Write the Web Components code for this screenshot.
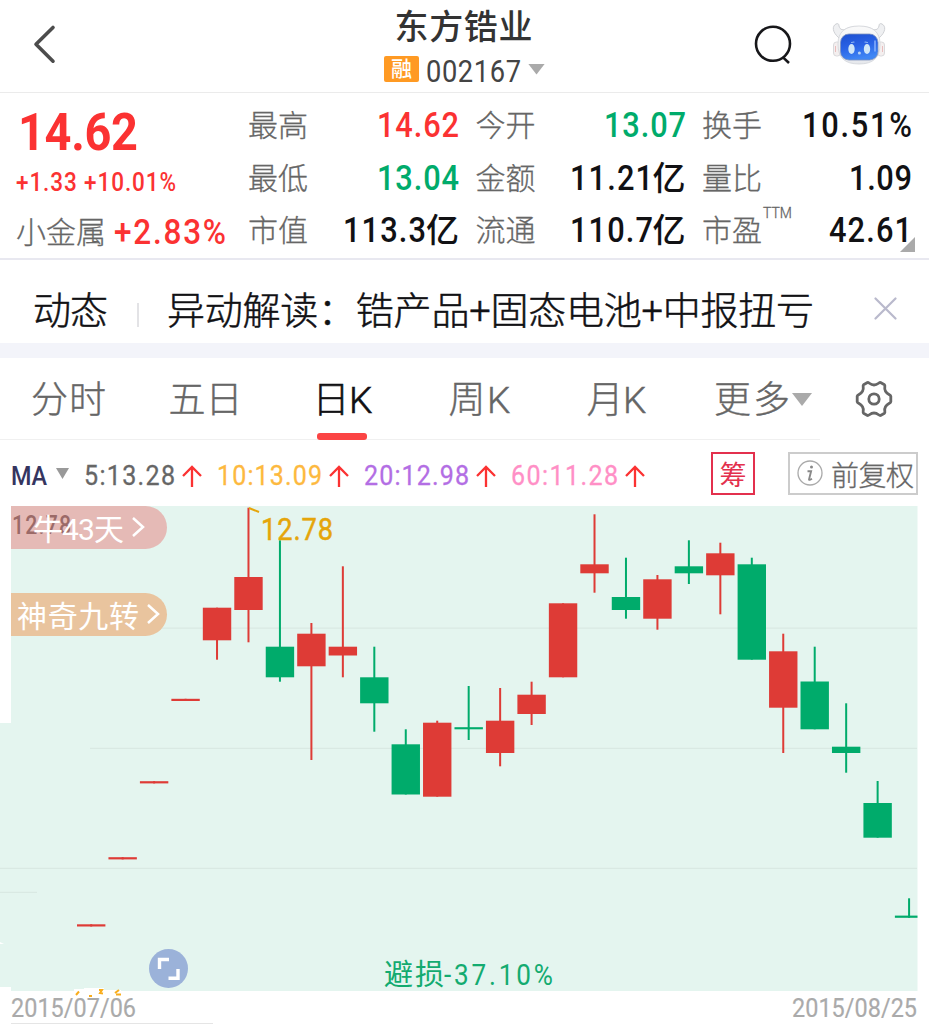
<!DOCTYPE html>
<html lang="zh-CN">
<head>
<meta charset="utf-8">
<title>东方锆业 002167</title>
<style>
  html, body {
    margin: 0;
    padding: 0;
    background: #fff;
  }

  body {
    width: 929px;
    height: 1024px;
    overflow: hidden;
    font-family: Roboto, "Noto Sans CJK SC", sans-serif;
    --up: #fb3232;
    --down: #00ab6b;
    --ink: #111114;
    --muted: #666;
  }
</style>
</head>
<body>
<stock-page></stock-page>

<script>
/* Text set to a given width with letter-spacing; "k" condenses the glyphs themselves. */
class FitText extends HTMLElement {
  constructor() {
    super();
    this.shadow = this.attachShadow({ mode: 'open' });
    this.shadow.innerHTML = `<style>
      :host { display: inline-block; white-space: nowrap; }
      span { display: inline-block; transform-origin: 0 50%; }
    </style><span><slot></slot></span>`;
    this.inner = this.shadow.querySelector('span');
  }

  connectedCallback() {
    const target = Number(this.getAttribute('w'));
    const scale = Number(this.getAttribute('k')) || 1;
    const count = [...this.textContent].length;
    const natural = this.inner.getBoundingClientRect().width;
    if (!target || count < 2) return;
    this.inner.style.letterSpacing = `${(target / scale - natural) / (count - 1)}px`;
    this.inner.style.transform = `scaleX(${scale})`;
    this.style.width = `${target}px`;
  }
}

class DownMark extends HTMLElement {
  constructor() {
    super();
    this.shadow = this.attachShadow({ mode: 'open' });
    this.shadow.innerHTML = `<style>
      :host { display: block; width: var(--w, 17px); height: var(--h, 11px); flex: none; }
      div { width: 100%; height: 100%; background: var(--mark, #aaa); clip-path: polygon(0 0, 100% 0, 50% 100%); }
    </style><div></div>`;
  }
}

class StockHeader extends HTMLElement {
  constructor() {
    super();
    this.shadow = this.attachShadow({ mode: 'open' });
    this.shadow.innerHTML = `${this.templateCSS()} ${this.templateHTML()}`;
  }

  templateCSS() {
    return `<style>
    :host {
      display: grid;
      grid-template-columns: 300px 329px 300px;
      box-sizing: border-box;
      height: 93px;
      border-bottom: 1px solid #ebebeb;
      color: #333;
    }
    svg { display: block; }
    .back { padding: 24px 0 0 32px; }
    .middle { display: flex; flex-direction: column; align-items: center; }
    .name { font-size: 34px; font-weight: 500; line-height: 40px; margin: 7px 2px 0 0; }
    .code { display: flex; align-items: center; height: 30px; margin-top: 9px; font-size: 31px; line-height: 30px; color: #444; }
    .code fit-text { padding-top: 1px; }
    .badge { width: 35px; height: 26px; line-height: 26px; margin: -4px 7px 0 0; border-radius: 2px; background: #ff9a23; color: #fff; font-size: 21px; font-weight: 500; text-align: center; }
    down-mark { margin: -4px 0 0 7px; }
    .tools { display: flex; justify-content: flex-end; padding: 22px 43px 0 0; gap: 38px; }
    </style>`;
  }

  templateHTML() {
    return `
      <div class="back">
        <svg width="26" height="42" viewBox="0 0 26 42" fill="none" stroke="#4c4c4c" stroke-width="3.6" stroke-linecap="round" stroke-linejoin="round">
          <path d="M21 3.500 4 20.300 21 37.200"/>
        </svg>
      </div>
      <div class="middle">
        <div class="name"><fit-text w="138">东方锆业</fit-text></div>
        <div class="code">
          <span class="badge">融</span>
          <fit-text w="95" k=".88">002167</fit-text>
          <down-mark></down-mark>
        </div>
      </div>
      <div class="tools">
        <svg width="42" height="44" viewBox="0 0 42 44" fill="none" stroke="#17171a" stroke-width="2.600">
          <circle cx="21" cy="21.800" r="17"/>
          <path d="M31 35.400 37 41"/>
        </svg>
        <svg width="54" height="44" viewBox="0 0 54 44">
          <defs>
            <linearGradient id="face" x1="0" y1="0" x2="0.300" y2="1">
              <stop offset="0" stop-color="#1c4fd0"/>
              <stop offset=".55" stop-color="#2a63e6"/>
              <stop offset="1" stop-color="#3f86f4"/>
            </linearGradient>
            <linearGradient id="shell" x1="0" y1="0" x2="0" y2="1">
              <stop offset="0" stop-color="#fafafa"/>
              <stop offset="1" stop-color="#e6e8ec"/>
            </linearGradient>
          </defs>
          <path d="M7 16C0 10 0 4 4 2c2-1 3 0 3 2 1 4 4 5 9 2 7-2 15-2 22 0 5 3 8 2 9-2 0-2 1-3 3-2 4 2 4 8-3 14z" fill="#eff0f2" stroke="#cfd1d5" stroke-width="1"/>
          <rect x="1.500" y="20" width="7" height="14" rx="3" fill="#f4efef" stroke="#d9d9dc"/>
          <rect x="45.500" y="20" width="7" height="14" rx="3" fill="#f4efef" stroke="#d9d9dc"/>
          <path d="M3.500 24v6M50.500 24v6" stroke="#e9bdbd" stroke-width="1"/>
          <path d="M27 4c14 0 21 6 21 18 0 14-7 20-21 20S6 36 6 22C6 10 13 4 27 4z" fill="url(#shell)" stroke="#d0d3d8" stroke-width=".8"/>
          <rect x="8.500" y="12" width="37.500" height="26" rx="8.500" fill="url(#face)" stroke="#7f93bd" stroke-width=".8"/>
          <path d="M43 19v10" stroke="#8fb6ff" stroke-width="1.400" stroke-linecap="round"/>
          <ellipse cx="19.500" cy="27" rx="3.200" ry="5" fill="#cfe6f8"/>
          <ellipse cx="35" cy="27" rx="3.200" ry="5" fill="#cfe6f8"/>
          <path d="M19.500 20.500l2.500-.5M33 20l2.500.5" stroke="#8fb8f5" stroke-width="1.200" stroke-linecap="round"/>
          <circle cx="27.400" cy="31" r="1.500" fill="#b5d3f7"/>
        </svg>
      </div>`;
  }
}

/* One label with its value: the label goes in the "label" slot. */
class StatItem extends HTMLElement {
  constructor() {
    super();
    this.shadow = this.attachShadow({ mode: 'open' });
    this.shadow.innerHTML = `<style>
      :host { display: flex; justify-content: space-between; align-items: center; color: var(--ink); }
      :host([tone="up"]) { color: var(--up); }
      :host([tone="down"]) { color: var(--down); }
      .label { font-size: 30px; font-weight: 300; line-height: 40px; color: var(--muted); display: flex; -webkit-text-stroke: .3px; }
      .value { font-size: 35px; font-weight: 500; line-height: 40px; }
      sup { font-size: 14px; line-height: 14px; margin: -5px 0 0 1px; }
    </style>
    <span class="label"><slot name="label"></slot><sup><slot name="mark"></slot></sup></span>
    <span class="value"><slot></slot></span>`;
  }
}

class QuotePanel extends HTMLElement {
  constructor() {
    super();
    this.shadow = this.attachShadow({ mode: 'open' });
    this.stats = [
      ['最高', '14.62', 82, 'up'], ['今开', '13.07', 82, 'down'], ['换手', '10.51%', 110],
      ['最低', '13.04', 82, 'down'], ['金额', '11.21亿', 116], ['量比', '1.09', 63],
      ['市值', '113.3亿', 116], ['流通', '110.7亿', 116], ['市盈', '42.61', 83, '', 'TTM']
    ];
    this.render();
  }

  render() {
    this.shadow.innerHTML = `${this.templateCSS()} ${this.templateHTML()}`;
  }

  /* The unit 亿 is wider than the digits, so it keeps its own shape. */
  templateValue(value, width) {
    if (!value.endsWith('亿')) return `<fit-text w="${width}" k=".88">${value}</fit-text>`;
    return `<fit-text w="${width - 33}" k=".88">${value.slice(0, -1)}</fit-text><span style="display:inline-block;width:33px;font-size:33px">亿</span>`;
  }

  templateStat([label, value, width, tone = '', mark = '']) {
    return `<stat-item tone="${tone}"><span slot="label">${label}</span><span slot="mark">${mark}</span>${this.templateValue(value, width)}</stat-item>`;
  }

  templateCSS() {
    return `<style>
    :host {
      display: flex;
      box-sizing: border-box;
      height: 167px;
      padding: 7px 0 0 16px;
      border-bottom: 2px solid #e8e8f0;
      position: relative;
    }
    .main { width: 232px; color: var(--up); font-weight: 500; white-space: nowrap; }
    .price { height: 58px; line-height: 58px; margin-top: 4px; padding-left: 2px; font-size: 51px; font-weight: 700; }
    .change { height: 34px; line-height: 34px; margin-top: 4px; font-size: 25px; }
    .sector { display: flex; align-items: center; height: 44px; margin-top: 11px; font-size: 35px; line-height: 44px; }
    .sector span { font-size: 30px; font-weight: 300; color: var(--muted); margin-right: 8px; -webkit-text-stroke: .3px; }
    .stats { display: grid; grid-template-columns: 211px 210px 210px; grid-auto-rows: 52.5px; column-gap: 16.5px; }
    .corner { position: absolute; right: 14px; bottom: 6px; width: 15px; height: 15px; background: #aaa; clip-path: polygon(100% 0, 100% 100%, 0 100%); }
    </style>`;
  }

  templateHTML() {
    return `
      <div class="main">
        <div class="price"><fit-text w="120" k=".92">14.62</fit-text></div>
        <div class="change"><fit-text w="160" k=".9">+1.33 +10.01%</fit-text></div>
        <div class="sector"><span>小金属</span><fit-text w="112" k=".9">+2.83%</fit-text></div>
      </div>
      <div class="stats">${this.stats.map(s => this.templateStat(s)).join('')}</div>
      <div class="corner"></div>`;
  }
}

class NewsBar extends HTMLElement {
  constructor() {
    super();
    this.shadow = this.attachShadow({ mode: 'open' });
    this.shadow.innerHTML = `<style>
      :host { display: flex; align-items: center; box-sizing: border-box; height: 98px; padding: 19px 32px 0 33px; border-bottom: 15px solid #f3f4fa; font-size: 38px; font-weight: 300; line-height: 50px; color: var(--ink); -webkit-text-stroke: .5px; }
      i { width: 2px; height: 24px; margin: 7px 28px 0 29px; background: #e3e3e6; }
      svg { margin: -5px 0 0 auto; }
    </style>
    <fit-text w="75">动态</fit-text>
    <i></i>
    <fit-text w="647">异动解读：锆产品+固态电池+中报扭亏</fit-text>
    <svg width="23" height="23" viewBox="0 0 23 23" stroke="#b9b9cc" stroke-width="2.200" stroke-linecap="round">
      <path d="M1.500 1.500 21.500 21.500M21.500 1.500 1.500 21.500"/>
    </svg>`;
  }
}

class PeriodTabs extends HTMLElement {
  constructor() {
    super();
    this.shadow = this.attachShadow({ mode: 'open' });
    this.shadow.innerHTML = `${this.templateCSS()} ${this.templateHTML()}`;
  }

  templateCSS() {
    return `<style>
    :host {
      display: grid;
      grid-template-columns: repeat(5, 137px) 135px 1fr;
      height: 82px;
      font-size: 37px;
      font-weight: 300;
      color: var(--muted);
      -webkit-text-stroke: .4px;
    }
    div { box-sizing: border-box; height: 82px; border-bottom: 1px solid #f0f0f0; display: flex; justify-content: center; line-height: 85px; position: relative; }
    .active { color: var(--ink); -webkit-text-stroke: .6px; }
    .active::after { content: ''; position: absolute; left: 43px; bottom: -1px; width: 50px; height: 7px; border-radius: 3px; background: #fb4444; }
    .more { justify-content: flex-start; padding-left: 29px; }
    .more down-mark { --w: 20px; --h: 13px; margin: 35px 0 0 2px; }
    .gear { border: 0; justify-content: flex-start; align-items: center; padding-left: 34px; }
    </style>`;
  }

  templateHTML() {
    return `
      <div><fit-text w="75">分时</fit-text></div>
      <div><fit-text w="74">五日</fit-text></div>
      <div class="active"><fit-text w="60">日K</fit-text></div>
      <div><fit-text w="62">周K</fit-text></div>
      <div><fit-text w="60">月K</fit-text></div>
      <div class="more"><fit-text w="76">更多</fit-text><down-mark></down-mark></div>
      <div class="gear">
        <svg width="40" height="40" viewBox="0 0 40 40" fill="none" stroke="#666" stroke-width="2.800" stroke-linejoin="round">
          <path d="M13.500 3.500C15 3 16 6 20 6s5-3 6.500-2.500l4 2.300c1.300 1-1 3 1 6.500s5 3 5.300 5v5.400c-.3 2-3.300 1.500-5.300 5s.3 5.500-1 6.500l-4 2.300C25 37 24 34 20 34s-5 3-6.500 2.500l-4-2.300c-1.300-1 1-3-1-6.500s-5-3-5.300-5v-5.400c.3-2 3.300-1.500 5.300-5s-.3-5.500 1-6.500z"/>
          <circle cx="20" cy="20" r="5.200"/>
        </svg>
      </div>`;
  }
}

class MaLegend extends HTMLElement {
  constructor() {
    super();
    this.shadow = this.attachShadow({ mode: 'open' });
    this.lines = [
      ['5:13.28', 91, '#666'],
      ['10:13.09', 105, '#fdb93f'],
      ['20:12.98', 105, '#b36ee4'],
      ['60:11.28', 107, '#ff8fc6']
    ];
    this.shadow.innerHTML = `${this.templateCSS()} ${this.templateHTML()}`;
  }

  templateCSS() {
    return `<style>
    :host { display: flex; align-items: center; box-sizing: border-box; height: 66px; padding: 5px 11px 0 11px; font-size: 28.5px; }
    .ma { font-size: 26px; font-weight: 500; color: #35355f; }
    down-mark { --w: 13px; --h: 11px; --mark: #999; margin: -4px 15px 0 9px; }
    .line { display: flex; align-items: center; margin-right: 15.5px; -webkit-text-stroke: .3px; }
    .arrow { margin: 0 0 0 6.5px; }
    .chips, .adjust { box-sizing: border-box; height: 43px; line-height: 47px; margin-top: -5px; }
    .chips { width: 44px; margin-left: auto; border: 2px solid #e3304d; color: #e3304d; font-size: 27px; line-height: 45px; text-align: center; }
    .adjust { display: flex; align-items: center; width: 130px; margin-left: 33px; padding-left: 7px; border: 2px solid #ccc; color: #666; font-size: 28px; font-weight: 300; white-space: nowrap; -webkit-text-stroke: .3px; }
    .adjust svg { margin: -1px 8px 0 0; flex: none; }
    .adjust fit-text { margin-top: 6px; }
    </style>`;
  }

  templateHTML() {
    const lines = this.lines.map(([text, width, color]) => `
      <span class="line">
        <fit-text w="${width}" k=".88" style="color:${color}">${text}</fit-text>
        <svg class="arrow" width="20" height="22" viewBox="0 0 20 22" fill="none" stroke="#fb3232" stroke-width="2.300">
          <path d="M10 22V2M1 11 10 2 19 11"/>
        </svg>
      </span>`).join('');
    return `
      <fit-text class="ma" w="36" k=".9">MA</fit-text>
      <down-mark></down-mark>
      ${lines}
      <span class="chips">筹</span>
      <span class="adjust">
        <svg width="26" height="26" viewBox="0 0 26 26" fill="none" stroke="#aaa" stroke-width="1.300">
          <circle cx="13" cy="13" r="12"/>
          <path d="M10.500 11.200h3.600L12 19.500q0 1 3-.8" stroke="#888" stroke-width="1.900"/>
          <circle cx="14.500" cy="7" r="1.500" fill="#888" stroke="none"/>
        </svg>
        <fit-text w="83">前复权</fit-text>
      </span>`;
  }
}

/* Rounded label stuck to the left side of the chart. */
class SideTag extends HTMLElement {
  constructor() {
    super();
    this.shadow = this.attachShadow({ mode: 'open' });
    this.shadow.innerHTML = `<style>
      :host { display: flex; align-items: center; box-sizing: border-box; width: 156px; height: 43px; border-radius: 0 22px 22px 0; font-size: 30px; line-height: 43px; color: #fff; }
      slot { display: block; padding-top: 4px; }
      svg { margin-left: 7px; margin-top: -1px; }
    </style>
    <slot></slot>
    <svg width="14" height="22" viewBox="0 0 14 22" fill="none" stroke="#fff" stroke-width="2.500"><path d="M2 2 12 11 2 20"/></svg>`;
  }
}

class CandleChart extends HTMLElement {
  constructor() {
    super();
    this.shadow = this.attachShadow({ mode: 'open' });
    // direction, high, body top, body bottom, low
    this.candles = [
      ['u', 418.3, 418.3, 420.5, 420.5],
      ['u', 351.2, 351.2, 353.4, 353.4],
      ['u', 275.2, 275.2, 277.4, 277.4],
      ['u', 192.8, 192.8, 195, 195],
      ['u', 101.7, 101.7, 134.3, 153.7],
      ['u', 1.7, 71, 104, 136.3],
      ['d', 34.3, 140.7, 171.3, 175.7],
      ['u', 117, 127.7, 160.3, 254],
      ['u', 60.3, 140.7, 149.5, 171.3],
      ['d', 140.7, 171.3, 197.3, 225.7],
      ['d', 223.3, 238.3, 288.5, 288.5],
      ['u', 214.7, 216.7, 290.7, 290.7],
      ['d', 180, 221.2, 223.3, 234],
      ['u', 182, 214.7, 247, 260.3],
      ['u', 175.7, 188.7, 208, 219],
      ['u', 97.3, 97.3, 171.3, 171.3],
      ['u', 8.3, 58.3, 67.3, 86.7],
      ['d', 51.7, 91, 104, 112.7],
      ['u', 69, 73.3, 112.7, 123.7],
      ['d', 34.3, 60.3, 67.3, 78],
      ['u', 36.7, 47.3, 69.3, 108.3],
      ['d', 51.7, 58.3, 153.7, 153.7],
      ['u', 127.7, 145.3, 201.7, 247],
      ['d', 140.7, 175.5, 223.3, 223.3],
      ['d', 197.3, 240.7, 247, 266.7],
      ['d', 275, 297, 331.7, 331.7],
      ['d', 392.3, 409.6, 411.8, 411.8]
    ];
    this.shadow.innerHTML = `${this.templateCSS()} ${this.templateHTML()}`;
  }

  templateCandle([direction, high, top, bottom, low], index) {
    const x = 91.2 + index * 31.457;
    return `<g class="${direction}">
      <rect x="${x - 1}" y="${high}" width="2" height="${low - high}"/>
      <rect x="${x - 14.2}" y="${top}" width="28.400" height="${bottom - top}"/>
    </g>`;
  }

  templateCSS() {
    return `<style>
    :host { display: block; position: relative; height: 485px; }
    svg { display: block; }
    .u { fill: #de3b36; }
    .d { fill: #00ab6b; }
    .grid { stroke: #d9e9e3; stroke-width: 1.200; }
    .over { position: absolute; }
    .scale { left: 12px; top: 7px; font-size: 25px; line-height: 26px; font-weight: 500; color: #222; }
    .peak { left: 261px; top: 6px; font-size: 31px; line-height: 36px; color: #e5a50a; -webkit-text-stroke: .5px; }
    .bull { left: 11px; top: -.5px; padding-left: 22px; background: rgba(229, 150, 147, .62); }
    .nine { left: 11px; top: 87px; padding-left: 6px; background: #e9c49e; }
    .stop { left: 384px; top: 451px; display: flex; font-size: 29px; line-height: 36px; color: #13ab70; }
    .expand { left: 149px; top: 443px; }
    </style>`;
  }

  templateHTML() {
    return `
      <svg width="929" height="485" viewBox="0 0 929 485">
        <defs><clipPath id="plot"><rect width="917.500" height="485"/></clipPath></defs>
        <path d="M11 0H917.500V485H11V481H0V438H4L0 436V217H11z" fill="#e4f5ef"/>
        <path class="grid" d="M11 122.200H917M90 242.300H917M0 362.300H917M0 386.300H37"/>
        <g clip-path="url(#plot)">${this.candles.map((c, i) => this.templateCandle(c, i)).join('')}</g>
        <path d="M249 2 259 6" stroke="#e5a50a" stroke-width="2"/>
        <path d="M74 485v-2h10v-1h20v2h17v1z" fill="#fff"/>
      </svg>
      <fit-text class="over scale" w="59" k=".85">12.78</fit-text>
      <fit-text class="over peak" w="72" k=".88">12.78</fit-text>
      <side-tag class="over bull"><fit-text w="91">牛43天</fit-text></side-tag>
      <side-tag class="over nine"><fit-text w="122">神奇九转</fit-text></side-tag>
      <svg class="over expand" width="39" height="39" viewBox="0 0 39 39">
        <circle cx="19.500" cy="19.500" r="19.500" fill="#9bb2d9"/>
        <path d="M10.500 20V10.500H20M29 20V29.200H19.500" fill="none" stroke="#fff" stroke-width="3.400"/>
      </svg>
      <div class="over stop"><fit-text w="60">避损</fit-text><fit-text w="109" k=".9">-37.10%</fit-text></div>`;
  }
}

class DateAxis extends HTMLElement {
  constructor() {
    super();
    this.shadow = this.attachShadow({ mode: 'open' });
    this.shadow.innerHTML = `<style>
      :host { display: flex; justify-content: space-between; box-sizing: border-box; height: 33px; padding: 0 12px 0 11px; font-size: 26px; line-height: 35px; color: #aaa; position: relative; -webkit-text-stroke: .2px; }
      .specks { position: absolute; left: 74px; top: -4px; }
      i { position: absolute; left: 11px; bottom: 0; width: 202px; height: 1px; background: #e5e5e5; }
    </style>
    <fit-text w="125" k=".9">2015/07/06</fit-text>
    <fit-text w="125" k=".9">2015/08/25</fit-text>
    <svg class="specks" width="50" height="12" viewBox="0 0 50 12" fill="none" stroke="#f9ad1c" stroke-width="2">
      <path d="M2 8 5 4.500M15 9h3M25 3h3l-2 3 3 .5M41 6l4-3M42 7.500h5"/>
    </svg>
    <i></i>`;
  }
}

class StockPage extends HTMLElement {
  constructor() {
    super();
    this.shadow = this.attachShadow({ mode: 'open' });
    this.shadow.innerHTML = `<style>
      :host { display: flex; flex-direction: column; width: 929px; height: 1024px; }
    </style>
    <stock-header></stock-header>
    <quote-panel></quote-panel>
    <news-bar></news-bar>
    <period-tabs></period-tabs>
    <ma-legend></ma-legend>
    <candle-chart></candle-chart>
    <date-axis></date-axis>`;
  }
}

window.customElements.define('stock-page', StockPage);
window.customElements.define('stock-header', StockHeader);
window.customElements.define('quote-panel', QuotePanel);
window.customElements.define('stat-item', StatItem);
window.customElements.define('news-bar', NewsBar);
window.customElements.define('period-tabs', PeriodTabs);
window.customElements.define('ma-legend', MaLegend);
window.customElements.define('side-tag', SideTag);
window.customElements.define('candle-chart', CandleChart);
window.customElements.define('date-axis', DateAxis);
window.customElements.define('down-mark', DownMark);
// last, so that the text is measured with every parent's styles in place
window.customElements.define('fit-text', FitText);
</script>
</body>
</html>
